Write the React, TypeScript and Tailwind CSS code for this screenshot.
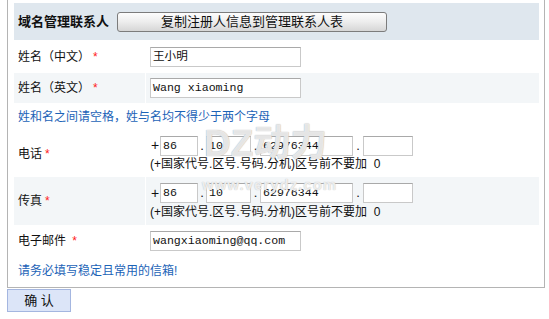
import React from 'react';

const CJK = '"Liberation Sans", "Noto Sans CJK SC", sans-serif';
const MONO = '"Liberation Mono", "Noto Sans CJK SC", monospace';

function Field({ value, w }: { value: string; w: string }) {
  return (
    <div
      className={`${w} flex h-[20px] items-center border border-[#c9c9c9] border-t-[#a9a9a9] bg-white pl-[2px] text-[11.6px] text-[#111] overflow-hidden whitespace-nowrap`}
      style={{ fontFamily: MONO }}
    >
      {value}
    </div>
  );
}

function Star() {
  return <span className="ml-[3px] text-[12px] text-[#ff2020]">*</span>;
}

function Row({
  label,
  gray,
  h,
  children,
}: {
  label: React.ReactNode;
  gray?: boolean;
  h: string;
  children: React.ReactNode;
}) {
  return (
    <div className={`flex ${h} ${gray ? 'bg-[#f3f6f8]' : 'bg-white'}`}>
      <div className="flex w-[131px] items-center pl-[4px] text-[12px] text-[#111]">{label}</div>
      <div className="w-px bg-white" />
      <div className="flex flex-1 items-center pl-[4px]">{children}</div>
    </div>
  );
}

function PhoneBlock({ third }: { third: string }) {
  return (
    <div className="flex flex-col gap-[1px]">
      <div className="flex items-center text-[13px] text-[#111]">
        <span className="w-[10px] pl-[1px] text-[14px]">+</span>
        <Field value="86" w="w-[38px]" />
        <span className="w-[8px] text-center">.</span>
        <Field value="10" w="w-[45px]" />
        <span className="w-[9px] text-center">.</span>
        <Field value={third} w="w-[93px]" />
        <span className="w-[10px] text-center">.</span>
        <Field value="" w="w-[50px]" />
      </div>
      <div className="text-[12px] leading-[15px] text-[#111]">(+国家代号.区号.号码.分机)区号前不要加&nbsp; 0</div>
    </div>
  );
}

export default function App() {
  return (
    <div className="relative h-[319px] w-[549px] bg-white" style={{ fontFamily: CJK }}>
      <div className="ml-[7px] w-[538px] border-x border-b border-[#b4b4b4] pb-[2px] pl-[6px] pr-[5px] pt-[3px]">
        <div className="flex h-[37px] items-center bg-[#dfe7ee] pl-[4px]">
          <span className="text-[13px] font-bold text-[#111]">域名管理联系人</span>
          <button className="ml-[8px] h-[20px] w-[270px] rounded-[3px] border border-[#7c7c7c] bg-gradient-to-b from-[#fdfdfd] via-[#ededed] to-[#d6d6d6] text-[13px] leading-[18px] text-[#111]">
            复制注册人信息到管理联系人表
          </button>
        </div>

        <Row h="h-[33px]" label={<>姓名（中文）<Star /></>}>
          <Field value="王小明" w="w-[151px]" />
        </Row>
        <Row gray h="h-[30px]" label={<>姓名（英文）<Star /></>}>
          <Field value="Wang xiaoming" w="w-[151px]" />
        </Row>

        <div className="flex h-[27px] items-center pl-[4px] text-[12px] text-[#1c63b7]">
          姓和名之间请空格，姓与名均不得少于两个字母
        </div>

        <Row h="h-[47px]" label={<>电话<Star /></>}>
          <PhoneBlock third="62976344" />
        </Row>
        <Row gray h="h-[48px]" label={<>传真<Star /></>}>
          <PhoneBlock third="62976344" />
        </Row>
        <Row h="h-[31px]" label={<>电子邮件&nbsp;<Star /></>}>
          <Field value="wangxiaoming@qq.com" w="w-[151px]" />
        </Row>

        <div className="flex h-[29px] items-center pl-[4px] text-[12px] text-[#1c63b7]">
          请务必填写稳定且常用的信箱!
        </div>
      </div>

      <button className="ml-[7px] mt-[1px] h-[23px] w-[64px] border border-[#a4b6e0] bg-[#dce5f8] text-[13px] text-[#111]">
        确&nbsp;认
      </button>

      <div
        className="pointer-events-none absolute left-[204px] top-[125px] text-[37px] font-bold leading-[38px] text-white/75"
        style={{ textShadow: '0 0 1px #9a9a9a' }}
      >
        DZ动力
      </div>
      <div
        className="pointer-events-none absolute left-[202px] top-[177px] text-[15px] font-bold leading-[16px] tracking-[1px] text-white/75"
        style={{ textShadow: '0 0 1px #b0b0b0' }}
      >
        www.verydz.com
      </div>
    </div>
  );
}
